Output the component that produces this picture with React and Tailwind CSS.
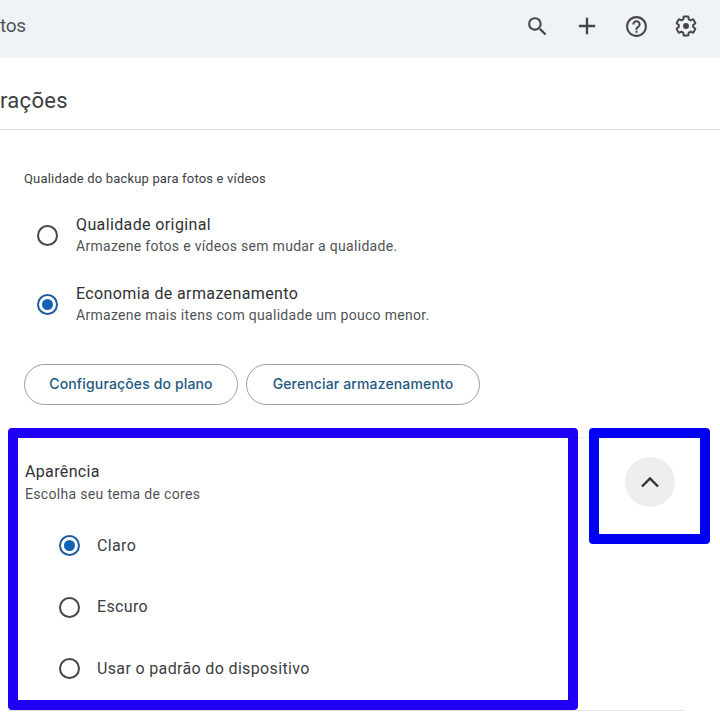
import { MdSearch, MdAdd, MdHelpOutline } from "react-icons/md";

function SettingsGlyph() {
  return (
    <svg viewBox="0 0 24 24" className="h-[24px] w-[24px]" fill="none" stroke="currentColor" strokeWidth="2" aria-hidden="true">
      <path d="M19.14 12.94c.04-.3.06-.61.06-.94 0-.32-.02-.64-.07-.94l2.03-1.58c.18-.14.23-.41.12-.61l-1.92-3.32c-.12-.22-.37-.29-.59-.22l-2.39.96c-.5-.38-1.03-.7-1.62-.94l-.36-2.54c-.04-.24-.24-.41-.48-.41h-3.84c-.24 0-.43.17-.47.41l-.36 2.54c-.59.24-1.13.57-1.62.94l-2.39-.96c-.22-.08-.47 0-.59.22L2.74 8.87c-.12.21-.08.47.12.61l2.03 1.58c-.05.3-.09.63-.09.94s.02.64.07.94l-2.03 1.58c-.18.14-.23.41-.12.61l1.92 3.32c.12.22.37.29.59.22l2.39-.96c.5.38 1.03.7 1.62.94l.36 2.54c.05.24.24.41.48.41h3.84c.24 0 .44-.17.47-.41l.36-2.54c.59-.24 1.13-.56 1.62-.94l2.39.96c.22.08.47 0 .59-.22l1.92-3.32c.12-.22.07-.47-.12-.61l-2.01-1.58z" />
      <circle cx="12" cy="12" r="3" fill="currentColor" stroke="none" />
    </svg>
  );
}

function Radio({ checked }) {
  return (
    <span className={`flex h-[21px] w-[21px] shrink-0 items-center justify-center rounded-full border-2 ${checked ? "border-[#1f5a9e]" : "border-[#444746]"}`}>
      {checked && <span className="h-[11px] w-[11px] rounded-full bg-[#1360b8]" />}
    </span>
  );
}

function PlanOption({ checked, title, description }) {
  return (
    <div className="flex items-center">
      <div className="w-[52px] pl-[13px]">
        <Radio checked={checked} />
      </div>
      <div>
        <p className="text-[16px] leading-[22px] tracking-[0.38px] text-[#303134]">{title}</p>
        <p className="text-[14px] leading-[20px] tracking-[0.3px] text-[#505356]">{description}</p>
      </div>
    </div>
  );
}

function ThemeOption({ checked, label }) {
  return (
    <div className="flex h-[21px] items-center gap-[17px]">
      <Radio checked={checked} />
      <span className="text-[16px] tracking-[0.35px] text-[#3c4043]">{label}</span>
    </div>
  );
}

function PillButton({ children, width }) {
  return (
    <button className={`flex h-[41px] items-center justify-center rounded-full border border-[#9aa0a6] pb-[2px] font-['Inter',sans-serif] text-[14px] font-medium tracking-[0.14px] text-[#24587f] ${width}`}>
      {children}
    </button>
  );
}

export default function App() {
  return (
    <div className="h-[727px] w-[720px] overflow-hidden bg-white font-['Roboto',sans-serif]">
      <header className="flex h-[58px] items-center justify-between bg-[#eff3f8] pb-[6px] pr-[10px]">
        <span className="text-[19px] tracking-[-0.3px] text-[#505356]">tos</span>
        <div className="flex items-center text-[#444746]">
          <span className="flex w-[49px] justify-center"><MdSearch size={25} /></span>
          <span className="flex w-[50px] justify-center"><MdAdd size={28} /></span>
          <span className="flex w-[49px] justify-center"><MdHelpOutline size={25} /></span>
          <span className="flex w-[49px] justify-center"><SettingsGlyph /></span>
        </div>
      </header>

      <div className="flex h-[72px] items-center border-b border-[#e0e0e0] pt-[13px]">
        <h1 className="text-[22px] tracking-[0.3px] text-[#3c4043]">rações</h1>
      </div>

      <main className="pt-[41px]">
        <p className="pl-[24px] text-[13px] leading-[16px] tracking-[0.18px] text-[#3c4043]">Qualidade do backup para fotos e vídeos</p>

        <div className="mt-[27px] flex flex-col gap-[27px] pl-[24px]">
          <PlanOption title="Qualidade original" description="Armazene fotos e vídeos sem mudar a qualidade." />
          <PlanOption checked title="Economia de armazenamento" description="Armazene mais itens com qualidade um pouco menor." />
        </div>

        <div className="mt-[39px] flex gap-[8px] pl-[24px]">
          <PillButton width="w-[214px]">Configurações do plano</PillButton>
          <PillButton width="w-[234px]">Gerenciar armazenamento</PillButton>
        </div>

        <div className="mt-[23px] ml-[8px] flex w-[676px] items-start border-b border-[#e4e4e4]">
          <section className="h-[282px] w-[570px] shrink-0 rounded-[4px] border-[10px] border-[#2000f5] pl-[7px] pt-[23px]">
            <h2 className="text-[16px] leading-[22px] tracking-[0.35px] text-[#303134]">Aparência</h2>
            <p className="mt-[1px] text-[14px] leading-[20px] tracking-[0.32px] text-[#505356]">Escolha seu tema de cores</p>
            <div className="mt-[31px] flex flex-col gap-[40.5px] pl-[34px]">
              <ThemeOption checked label="Claro" />
              <ThemeOption label="Escuro" />
              <ThemeOption label="Usar o padrão do dispositivo" />
            </div>
          </section>
          <div className="mt-[9px] w-[11px] shrink-0 border-t border-[#eeeeee]" />
          <div className="flex h-[116px] w-[121px] shrink-0 justify-center rounded-[4px] border-[10px] border-[#0000f5] pt-[19px]">
            <span className="flex h-[50px] w-[50px] items-center justify-center rounded-full bg-[#eeeeee] text-[#303134]">
              <svg viewBox="0 0 20 12" className="h-[12px] w-[20px]" fill="none" stroke="currentColor" strokeWidth="2.4" aria-hidden="true">
                <path d="M2 10.5 10 2.5l8 8" />
              </svg>
            </span>
          </div>
        </div>
      </main>
    </div>
  );
}
